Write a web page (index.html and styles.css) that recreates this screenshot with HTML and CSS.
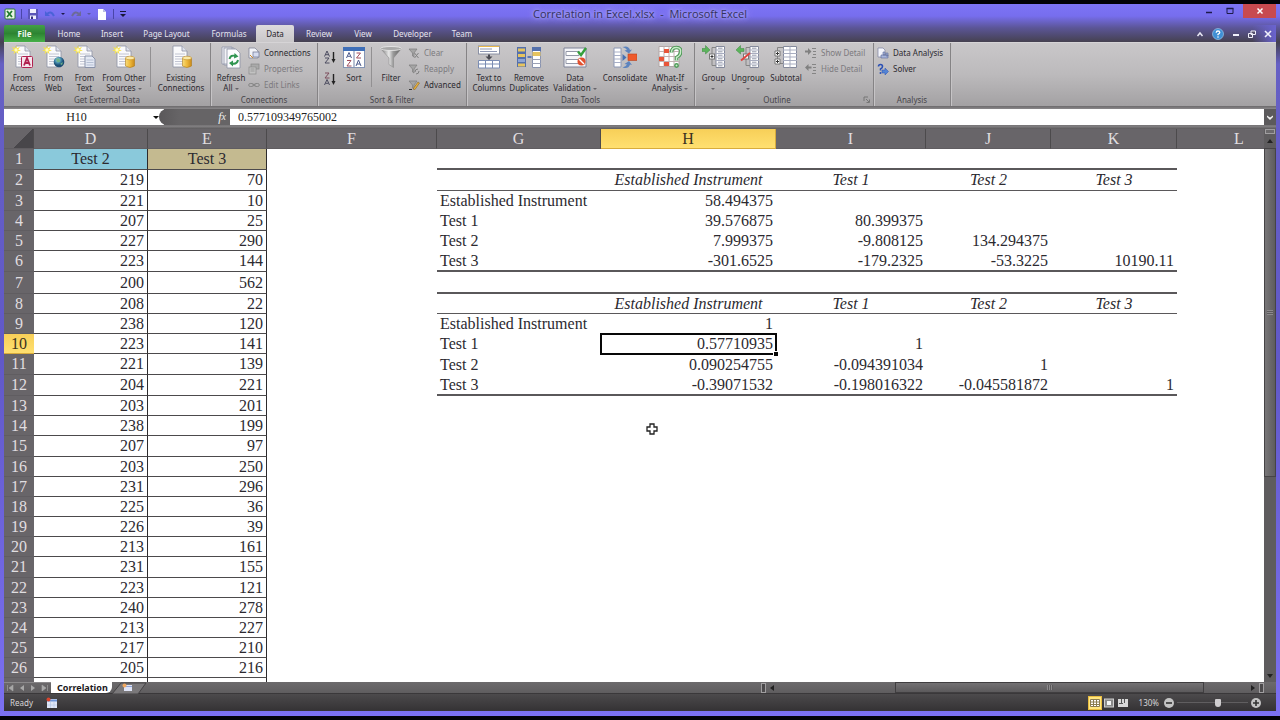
FILE: index.html
```html
<!DOCTYPE html>
<html lang="en">
<head>
<meta charset="utf-8">
<title>Correlation in Excel.xlsx - Microsoft Excel</title>
<link rel="stylesheet" href="styles.css">
</head>
<body>
<svg class="sprite" aria-hidden="true">
  <defs>
    <linearGradient id="gold" x1="0" x2="1"><stop offset="0" stop-color="#f7dc7a"/><stop offset=".5" stop-color="#efb93a"/><stop offset="1" stop-color="#c98a1c"/></linearGradient>
    <linearGradient id="steel" x1="0" x2="1"><stop offset="0" stop-color="#707070"/><stop offset=".4" stop-color="#e8e8e8"/><stop offset=".6" stop-color="#9a9a9a"/><stop offset="1" stop-color="#5c5c5c"/></linearGradient>
    <radialGradient id="globe" cx=".4" cy=".3"><stop offset="0" stop-color="#a8dcec"/><stop offset=".6" stop-color="#3f86a8"/><stop offset="1" stop-color="#1d4e74"/></radialGradient>
  </defs>
  <symbol id="sheet" viewBox="0 0 24 24"><path d="M5 1h9l5 5v16H5z" fill="#fafafc" stroke="#8e93a5" stroke-width=".8"/><path d="M14 1v5h5" fill="#dfe2ec" stroke="#8e93a5" stroke-width=".8"/><path d="M7 9h10M7 11.500h10M7 14h10M7 16.500h10M7 19h10" stroke="#b4b8c8" stroke-width=".8"/></symbol>
  <symbol id="star" viewBox="0 0 12 12"><path d="M6 0l1 4 4-2-2.500 3.500L12 7 8 7.500 9 11 6 8.500 3 11l1-3.500L0 7l3.500-1.500L1 2l4 2z" fill="#f7e34d"/><circle cx="6" cy="6" r="2" fill="#fffbc0"/></symbol>
  <symbol id="outline" viewBox="0 0 24 24"><path d="M14 1.500h8.500v21H14z" fill="#fff" stroke="#858a9c"/><path d="M14 5h9M14 8.500h9M14 12h9M14 15.500h9M14 19h9" stroke="#a8adc0"/><path d="M16 3.200h4.500M16 6.800h4.500M16 10.200h4.500M16 13.800h4.500M16 17.200h4.500M16 20.800h4.500" stroke="#858a9e" stroke-width=".9"/><path d="M14 2.500h-4v18h4" fill="none" stroke="#858585"/></symbol>
  <symbol id="funnel" viewBox="0 0 12 12"><path d="M1 2h8L6 6v4L4.500 9V6z" fill="#a5a5a5" stroke="#7c7c7c" stroke-width=".7"/></symbol>
</svg>

<div class="window">
  <header class="titlebar">
    <div class="quick">
      <svg class="i12" viewBox="0 0 12 12"><rect x="1" y="1" width="10" height="10" rx="1" fill="#e9f3e6" stroke="#2c7a35"/><path d="M3 3l5 6M8 3L3 9" stroke="#1f7a2e" stroke-width="1.800"/></svg>
      <span class="quick-sep"></span>
      <button aria-label="Save"><svg class="i12" viewBox="0 0 12 12"><path d="M1 1h10v10H1z" fill="#5b56b8"/><path d="M3 1h6v4H3zM3 7.500h6V11H3z" fill="#f0f0fc"/><path d="M4 8.500h2V11H4z" fill="#35317c"/></svg></button>
      <button aria-label="Undo"><svg class="i12" viewBox="0 0 12 12"><path d="M3 6q4-4 7 2" fill="none" stroke="#4a62d8" stroke-width="2"/><path d="M1 3v5h5z" fill="#4a62d8"/></svg></button>
      <i class="caret dim"></i>
      <button aria-label="Redo"><svg class="i12" viewBox="0 0 12 12"><path d="M9 6Q5 2 2 8" fill="none" stroke="#6c6a98" stroke-width="2"/><path d="M11 3v5H6z" fill="#6c6a98"/></svg></button>
      <i class="caret faint"></i>
      <button aria-label="New"><svg class="i12" viewBox="0 0 12 12"><path d="M2 1h5l3 3v8H2z" fill="#fff"/><path d="M7 1v3h3z" fill="#b9bce0"/></svg></button>
      <span class="quick-sep"></span>
      <button aria-label="Customize toolbar"><svg class="i8" viewBox="0 0 8 8"><path d="M1 1.500h6" stroke="#181838"/><path d="M1 4h6L4 7z" fill="#181838"/></svg></button>
    </div>
    <h1>Correlation in Excel.xlsx &nbsp;-&nbsp; Microsoft Excel</h1>
    <div class="winbtns">
      <button aria-label="Minimize"><svg class="i8" viewBox="0 0 8 8"><path d="M1 5.500h6" stroke="#1c1a4a" stroke-width="1.500"/></svg></button>
      <button aria-label="Maximize"><svg class="i8" viewBox="0 0 8 8"><path d="M1 1.500h6v5H1z" fill="none" stroke="#1c1a4a"/><path d="M.5 1.500h7" stroke="#1c1a4a" stroke-width="1.500"/></svg></button>
      <button class="close" aria-label="Close"><svg class="i8" viewBox="0 0 8 8"><path d="M1.500 1.500l5 5M6.500 1.500l-5 5" stroke="#fff" stroke-width="1.500"/></svg></button>
    </div>
  </header>

  <nav class="tabs">
    <button class="tab file">File</button>
    <button class="tab w48">Home</button>
    <button class="tab w38">Insert</button>
    <button class="tab w71">Page Layout</button>
    <button class="tab w54">Formulas</button>
    <button class="tab w38 active">Data</button>
    <button class="tab w50">Review</button>
    <button class="tab w38">View</button>
    <button class="tab w61">Developer</button>
    <button class="tab w38">Team</button>
    <div class="docbtns">
      <button aria-label="Collapse ribbon"><svg class="i8" viewBox="0 0 8 8"><path d="M1.500 6L4 3l2.500 3" fill="none" stroke="#e8e8f4" stroke-width="1.500"/></svg></button>
      <button aria-label="Help"><svg class="i12" viewBox="0 0 12 12"><circle cx="6" cy="6" r="5.500" fill="#3f8fd4" stroke="#a8d4f4" stroke-width=".6"/><path d="M4.200 4.700Q4.300 3 6 3t1.800 1.500Q7.800 5.500 6 6.300v1" fill="none" stroke="#fff" stroke-width="1.300"/><circle cx="6" cy="9" r=".8" fill="#fff"/></svg></button>
      <button aria-label="Minimize workbook"><svg class="i8" viewBox="0 0 8 8"><path d="M1 5h6" stroke="#f0f0fa" stroke-width="2"/></svg></button>
      <button aria-label="Restore workbook"><svg class="i8" viewBox="0 0 8 8"><path d="M3 1h4.500v3.500H3zM.5 3.500H4.500v4H.5z" fill="#55506c" stroke="#f0f0fa"/></svg></button>
      <button aria-label="Close workbook"><svg class="i8" viewBox="0 0 8 8"><path d="M1 1l6 6M7 1L1 7" stroke="#f0f0fa" stroke-width="1.600"/></svg></button>
    </div>
  </nav>

  <section class="ribbon">
    <div class="group g-get">
      <div class="tools">
        <button class="big w31"><svg viewBox="0 0 24 24"><use href="#sheet"/><use href="#star" x="0" y="0" width="10" height="10"/><rect x="10.500" y="11.500" width="11" height="11" rx="1" fill="#f6e4ec" stroke="#b0214f"/><path d="M13 20.500l3-7.500 3 7.500M14 18h4" fill="none" stroke="#b0214f" stroke-width="1.800"/></svg><span>From<br>Access</span></button>
        <button class="big w31"><svg viewBox="0 0 24 24"><use href="#sheet"/><use href="#star" x="0" y="0" width="10" height="10"/><circle cx="17" cy="17" r="5.300" fill="url(#globe)"/><path d="M14 14q3-2 4 1t-3 2zM18 19l3-2-1 3z" fill="#6fb38a"/></svg><span>From<br>Web</span></button>
        <button class="big w31"><svg viewBox="0 0 24 24"><use href="#sheet"/><use href="#star" x="0" y="0" width="10" height="10"/><path d="M12 11h7l3 3v8.500H12z" fill="#e3e8f3" stroke="#8a93aa"/><path d="M13.500 15h7M13.500 17.500h7M13.500 20h7" stroke="#a8b4ca" stroke-width=".8"/></svg><span>From<br>Text</span></button>
        <button class="big w48"><svg viewBox="0 0 24 24"><use href="#sheet"/><use href="#star" x="0" y="0" width="10" height="10"/><path d="M13.500 13v8q4.500 3 9 0v-8z" fill="url(#gold)" stroke="#b07c1a" stroke-width=".6"/><ellipse cx="18" cy="13" rx="4.500" ry="1.800" fill="#fbe9a6" stroke="#c08d28" stroke-width=".6"/></svg><span>From Other<br>Sources <i class="caret"></i></span></button>
        <span class="vsep"></span>
        <button class="big w56"><svg viewBox="0 0 24 24"><use href="#sheet" x="-1"/><path d="M13.500 13v8q4.500 3 9 0v-8z" fill="url(#gold)" stroke="#b07c1a" stroke-width=".6"/><ellipse cx="18" cy="13" rx="4.500" ry="1.800" fill="#fbe9a6" stroke="#c08d28" stroke-width=".6"/></svg><span>Existing<br>Connections</span></button>
      </div>
      <h2>Get External Data</h2>
    </div>

    <div class="group g-conn">
      <div class="tools">
        <button class="big w34"><svg viewBox="0 0 24 24"><path d="M3 2h10v17H3zM5 3h10v17H5z" fill="#f2f2f6" stroke="#9196a8" stroke-width=".8"/><path d="M8 4h9l4 4v15H8z" fill="#fbfbfd" stroke="#8e93a5" stroke-width=".8"/><path d="M10.500 14q1-4.500 6-3" fill="none" stroke="#2f9450" stroke-width="2"/><path d="M15.500 8l4 3.500-4.500 2zM14 15.500l-4 2.500 4 3.500z" fill="#2f9450"/><path d="M19 15q-1 4.500-6 3.500" fill="none" stroke="#2f9450" stroke-width="2"/></svg><span>Refresh<br>All <i class="caret"></i></span></button>
        <div class="stack">
          <button class="small"><svg viewBox="0 0 12 12"><path d="M1 1h6l3 3v7H1z" fill="#f2f3f8" stroke="#787d90" stroke-width=".7"/><rect x="5" y="5" width="6" height="5" fill="#d6dcf0" stroke="#6c7290" stroke-width=".7"/><path d="M2 8l3 3" stroke="#d08a28"/></svg>Connections</button>
          <button class="small" disabled><svg viewBox="0 0 12 12"><rect x="3" y="1" width="8" height="5" fill="#aaa" stroke="#888" stroke-width=".7"/><rect x="1" y="4" width="7" height="7" fill="#c2c2c2" stroke="#8a8a8a" stroke-width=".7"/><path d="M2.500 6h4M2.500 8h4" stroke="#8a8a8a" stroke-width=".7"/></svg>Properties</button>
          <button class="small" disabled><svg viewBox="0 0 12 12"><rect x=".7" y="4.500" width="5" height="3" rx="1.500" fill="none" stroke="#888"/><rect x="6.300" y="4.500" width="5" height="3" rx="1.500" fill="none" stroke="#888"/><path d="M4 6h4" stroke="#888"/></svg>Edit Links</button>
        </div>
      </div>
      <h2>Connections</h2>
    </div>

    <div class="group g-sort">
      <div class="tools">
        <div class="sorts">
          <button aria-label="Sort A to Z"><svg viewBox="0 0 14 14"><path d="M1.500 6.500L4 1l2.500 5.500M2.500 4.700h3" fill="none" stroke="#4c4c60"/><path d="M2 8h4l-4 5h4.500" fill="none" stroke="#4c4c60"/><path d="M10.500 2v8" stroke="#222" stroke-width="1.400"/><path d="M8.500 9h4l-2 4z" fill="#222"/></svg></button>
          <button aria-label="Sort Z to A"><svg viewBox="0 0 14 14"><path d="M2 1h4L2 6h4.500" fill="none" stroke="#7c4c5c"/><path d="M1.500 13L4 7.500 6.500 13M2.500 11.300h3" fill="none" stroke="#4c4c60"/><path d="M10.500 2v8" stroke="#222" stroke-width="1.400"/><path d="M8.500 9h4l-2 4z" fill="#222"/></svg></button>
        </div>
        <button class="big w30"><svg viewBox="0 0 24 24"><rect x="1.500" y="2.500" width="21" height="20" fill="#fff" stroke="#8494b4"/><path d="M1 2h22v4H1z" fill="#3f6fb8"/><path d="M12 6v16" stroke="#7082a6"/><path d="M4.500 13L7 7.500 9.500 13M5.500 11.300h3M14 21l2.500-6 2.500 6M15 19h3" fill="none" stroke="#4c5a8c"/><path d="M5 15.500h4L5 21h4.500M14.500 8h4l-4 5H19" fill="none" stroke="#a04c5c"/></svg><span>Sort</span></button>
        <span class="vsep"></span>
        <button class="big w34"><svg viewBox="0 0 24 24"><path d="M1.500 3.500h21L14.500 13v9.500l-4.500-3V13z" fill="url(#steel)" stroke="#858585" stroke-width=".5"/><ellipse cx="12" cy="3.500" rx="10.500" ry="2" fill="#a8a8a8" stroke="#ececec" stroke-width=".8"/></svg><span>Filter</span></button>
        <div class="stack">
          <button class="small" disabled><svg viewBox="0 0 12 12"><use href="#funnel"/><path d="M6.500 6l4 5M10.500 6l-4 5" stroke="#808080"/></svg>Clear</button>
          <button class="small" disabled><svg viewBox="0 0 12 12"><use href="#funnel"/><path d="M7 9q0-3 3-3M11 8q0 3-3 3" fill="none" stroke="#808080"/></svg>Reapply</button>
          <button class="small"><svg viewBox="0 0 12 12"><use href="#funnel"/><path d="M5 10L10 3l1.500 1L7 10.500z" fill="#e8b13c" stroke="#7a5a1c" stroke-width=".5"/><path d="M1 10.500h3" stroke="#333"/></svg>Advanced</button>
        </div>
      </div>
      <h2>Sort &amp; Filter</h2>
    </div>

    <div class="group g-data">
      <div class="tools">
        <button class="big w38"><svg viewBox="0 0 24 24"><rect x="1.500" y="1" width="21" height="8" fill="#fff" stroke="#8a90a4"/><path d="M1.500 1.500h21" stroke="#e8b84c"/><path d="M3 4h12M3 6.500h17" stroke="#8f98b4"/><path d="M11 9.500h2v2h2.500L12 15 8.500 11.500H11z" fill="#4a4a52"/><path d="M1.500 15.500h21v7.500h-21zM8.500 15.500v7.500M15.500 15.500v7.500M1.500 19h21" fill="#fff" stroke="#7b8db4"/></svg><span>Text to<br>Columns</span></button>
        <button class="big w42"><svg viewBox="0 0 24 24"><path d="M0 2h9v20H0z" fill="#5470ac"/><path d="M1 3.500h7v3H1zM1 9h7v3H1zM1 18.500h7v3H1z" fill="#e6c460"/><path d="M1 14h7v3H1z" fill="#8fa5d4"/><path d="M10.500 12h4" stroke="#3d62b0" stroke-width="1.500"/><path d="M15.500 2.500h8v20h-8z" fill="#fff" stroke="#8a94b0"/><path d="M15 2h9v4h-9z" fill="#5470ac"/><path d="M15.500 7h8v4h-8z" fill="#e6c460"/><path d="M15 14.500h9M15 18.500h9" stroke="#9aa0b4"/></svg><span>Remove<br>Duplicates</span></button>
        <button class="big w50"><svg viewBox="0 0 24 24"><path d="M1 3h22v19H1z" fill="#f4f4f8" stroke="#7e8398"/><path d="M3 6.500h13v4H3zM3 14.500h13v4H3z" fill="#fff" stroke="#9498a8"/><path d="M15 6.500l3 3.500 5-7" fill="none" stroke="#35a03c" stroke-width="2.400"/><circle cx="18.500" cy="16.500" r="4" fill="#e2502f"/><path d="M16 14l5 5" stroke="#fff" stroke-width="1.400"/></svg><span>Data<br>Validation <i class="caret"></i></span></button>
        <button class="big w50"><svg viewBox="0 0 24 24"><path d="M1 3h7v19H1z" fill="#fff" stroke="#8a96b4"/><path d="M1 7h7M1 10.500h7M1 14h7M1 17.500h7" stroke="#a8b0c8"/><path d="M9.500 2q6-2 7.500 3l2-.5-3 4-4.500-3 2.500-.5Q13 3 9.500 2zM9.500 22.500q6 2 7.500-3l2 .5-3-4-4.500 3 2.500.5Q13 21.500 9.500 22.500z" fill="#5c83be"/><path d="M9.500 9l4 3.500-4 3.500z" fill="#4671b4"/><rect x="15" y="9" width="9" height="6.500" fill="#ee5a2c" stroke="#b84420" stroke-width=".6"/></svg><span>Consolidate</span></button>
        <button class="big w40"><svg viewBox="0 0 24 24"><path d="M1 1.500h20v20H1z" fill="#fff" stroke="#b0a6a6"/><path d="M1 6.500h20M1 11.500h20M1 16.500h20M6 1.500v20M11 1.500v20M16 1.500v20" stroke="#c3b3b3"/><path d="M6 4h5v4H6zM1 12h5v4H1zM6 17h5v4H6z" fill="#e8553a"/><path d="M13.500 7.500q0-5 5-5t4 5q0 3-4 5v3" fill="none" stroke="#4f9a58" stroke-width="3.600"/><path d="M13.500 7.500q0-5 5-5t4 5q0 3-4 5v3" fill="none" stroke="#c8ecc8" stroke-width="1.400"/><circle cx="18.500" cy="20.500" r="2.400" fill="#4f9a58"/><circle cx="18.500" cy="20.500" r="1" fill="#c8ecc8"/></svg><span>What-If<br>Analysis <i class="caret"></i></span></button>
      </div>
      <h2>Data Tools</h2>
    </div>

    <div class="group g-out">
      <div class="tools">
        <button class="big w31"><svg viewBox="0 0 24 24"><use href="#outline"/><rect x="7.500" y="9" width="5" height="5" fill="#fff" stroke="#777"/><path d="M8.500 11.500h3M10 10v3" stroke="#333"/><path d="M0 3.500h3.500V.5L8 5 3.500 9V6.500H0z" fill="#5cb45c" stroke="#3c8a40" stroke-width=".5"/></svg><span>Group<br><i class="caret"></i></span></button>
        <button class="big w38"><svg viewBox="0 0 24 24"><use href="#outline"/><rect x="7.500" y="9" width="5" height="5" fill="#fff" stroke="#777"/><path d="M5 15.500L14 8" stroke="#e04440" stroke-width="2"/><path d="M8 3.500H4.500V.5L0 5l4.500 4V6.500H8z" fill="#5cb45c" stroke="#3c8a40" stroke-width=".5"/></svg><span>Ungroup<br><i class="caret"></i></span></button>
        <button class="big w38"><svg viewBox="0 0 24 24"><path d="M9.500 1.500h13v21h-13z" fill="#fff" stroke="#858a9c"/><path d="M9 5h14M9 8.500h14M9 12h14M9 15.500h14M9 19h14M16 1.500v21" stroke="#a8adc0"/><path d="M9 2.500H3.500v16H9" fill="none" stroke="#858585"/><path d="M1 6h5v5H1zM1 14h5v5H1z" fill="#fff" stroke="#777"/><path d="M2 8.500h3M3.500 7v3M2 16.500h3M3.500 15v3" stroke="#333"/></svg><span>Subtotal</span></button>
        <div class="stack">
          <button class="small" disabled><svg viewBox="0 0 12 12"><path d="M0 3.500h3V1l3.500 3.500L3 8V5.500H0z" fill="#808080"/><path d="M7 1.500h4M8 4.500h3M8 7.500h3M7 10.500h4" stroke="#858585"/></svg>Show Detail</button>
          <button class="small" disabled><svg viewBox="0 0 12 12"><path d="M6.500 3.500h-3V1L0 4.500 3.500 8V5.500h3z" fill="#808080"/><path d="M7 1.500h4M8 4.500h3M8 7.500h3M7 10.500h4" stroke="#858585"/></svg>Hide Detail</button>
        </div>
      </div>
      <h2>Outline</h2>
      <button class="launcher" aria-label="Outline settings"><svg class="i8" viewBox="0 0 8 8"><path d="M1 5V1h4" fill="none" stroke="#777"/><path d="M3 3l3 3M6.500 3.500v3h-3" fill="none" stroke="#777"/></svg></button>
    </div>

    <div class="group g-ana">
      <div class="tools">
        <div class="stack">
          <button class="small"><svg viewBox="0 0 12 12"><path d="M1 1h5l2 2v7H1z" fill="#f4f5fb" stroke="#7c82a0" stroke-width=".7"/><path d="M4 8h7v3H4zM6 5h2v3H6zM9 6h2v3H9z" fill="#a8b6dc" stroke="#5c6a98" stroke-width=".6"/></svg>Data Analysis</button>
          <button class="small"><svg viewBox="0 0 12 12"><path d="M1.500 3.500Q1.500 1.500 3.500 1.500t2 2Q5.500 5 3.500 6v1.500" fill="none" stroke="#2b50b4" stroke-width="1.600"/><circle cx="3.500" cy="10" r="1" fill="#2b50b4"/><path d="M5 7h3V5l3.500 3.500L8 12v-2H5z" fill="#5484d4" stroke="#2b50b4" stroke-width=".5"/></svg>Solver</button>
        </div>
      </div>
      <h2>Analysis</h2>
    </div>
  </section>

  <div class="formula">
    <div class="namebox"><input aria-label="Name box" value="H10"><button aria-label="Names"><i class="caret dark"></i></button></div>
    <div class="fxbar"><span class="knob"></span><button class="fx" aria-label="Insert function">f<sub>x</sub></button></div>
    <input class="fxinput" aria-label="Formula" value="0.577109349765002">
    <button class="expand" aria-label="Expand formula bar"><svg class="i8" viewBox="0 0 8 8"><path d="M1 2.500l3 2 3-2v1.500L4 7 1 4z" fill="#f4f4f4"/></svg></button>
  </div>

  <main class="work">
    <div class="sheet">
      <table class="grid">
        <colgroup><col class="c-n"><col class="c-d"><col class="c-e"><col class="c-f"><col class="c-g"><col class="c-h"><col class="c-i"><col class="c-j"><col class="c-k"><col class="c-l"></colgroup>
        <thead><tr><th class="corner"></th><th>D</th><th>E</th><th>F</th><th>G</th><th class="on">H</th><th>I</th><th>J</th><th>K</th><th>L</th></tr></thead>
        <tbody>
        <tr class="t rule2"><th>1</th><td class="b blue">Test 2</td><td class="b tan">Test 3</td><td></td><td class="m"></td><td class="m"></td><td class="m"></td><td class="m"></td><td class="m"></td><td></td></tr>
        <tr class="t rule1 head"><th>2</th><td class="b">219</td><td class="b">70</td><td></td><td class="m"></td><td class="m">Established Instrument</td><td class="m">Test 1</td><td class="m">Test 2</td><td class="m">Test 3</td><td></td></tr>
        <tr><th>3</th><td class="b">221</td><td class="b">10</td><td></td><td class="l">Established Instrument</td><td>58.494375</td><td></td><td></td><td></td><td></td></tr>
        <tr><th>4</th><td class="b">207</td><td class="b">25</td><td></td><td class="l">Test 1</td><td>39.576875</td><td>80.399375</td><td></td><td></td><td></td></tr>
        <tr><th>5</th><td class="b">227</td><td class="b">290</td><td></td><td class="l">Test 2</td><td>7.999375</td><td>-9.808125</td><td>134.294375</td><td></td><td></td></tr>
        <tr class="t rule2"><th>6</th><td class="b">223</td><td class="b">144</td><td></td><td class="m l">Test 3</td><td class="m">-301.6525</td><td class="m">-179.2325</td><td class="m">-53.3225</td><td class="m">10190.11</td><td></td></tr>
        <tr class="tt rule2"><th>7</th><td class="b">200</td><td class="b">562</td><td></td><td class="m"></td><td class="m"></td><td class="m"></td><td class="m"></td><td class="m"></td><td></td></tr>
        <tr class="rule1 head"><th>8</th><td class="b">208</td><td class="b">22</td><td></td><td class="m"></td><td class="m">Established Instrument</td><td class="m">Test 1</td><td class="m">Test 2</td><td class="m">Test 3</td><td></td></tr>
        <tr><th>9</th><td class="b">238</td><td class="b">120</td><td></td><td class="l">Established Instrument</td><td>1</td><td></td><td></td><td></td><td></td></tr>
        <tr><th class="on">10</th><td class="b">223</td><td class="b">141</td><td></td><td class="l">Test 1</td><td class="selected">0.57710935</td><td>1</td><td></td><td></td><td></td></tr>
        <tr class="t"><th>11</th><td class="b">221</td><td class="b">139</td><td></td><td class="l">Test 2</td><td>0.090254755</td><td>-0.094391034</td><td>1</td><td></td><td></td></tr>
        <tr class="t rule2"><th>12</th><td class="b">204</td><td class="b">221</td><td></td><td class="m l">Test 3</td><td class="m">-0.39071532</td><td class="m">-0.198016322</td><td class="m">-0.045581872</td><td class="m">1</td><td></td></tr>
        <tr><th>13</th><td class="b">203</td><td class="b">201</td><td colspan="7"></td></tr>
        <tr><th>14</th><td class="b">238</td><td class="b">199</td><td colspan="7"></td></tr>
        <tr class="t"><th>15</th><td class="b">207</td><td class="b">97</td><td colspan="7"></td></tr>
        <tr><th>16</th><td class="b">203</td><td class="b">250</td><td colspan="7"></td></tr>
        <tr><th>17</th><td class="b">231</td><td class="b">296</td><td colspan="7"></td></tr>
        <tr><th>18</th><td class="b">225</td><td class="b">36</td><td colspan="7"></td></tr>
        <tr><th>19</th><td class="b">226</td><td class="b">39</td><td colspan="7"></td></tr>
        <tr><th>20</th><td class="b">213</td><td class="b">161</td><td colspan="7"></td></tr>
        <tr class="t"><th>21</th><td class="b">231</td><td class="b">155</td><td colspan="7"></td></tr>
        <tr><th>22</th><td class="b">223</td><td class="b">121</td><td colspan="7"></td></tr>
        <tr><th>23</th><td class="b">240</td><td class="b">278</td><td colspan="7"></td></tr>
        <tr><th>24</th><td class="b">213</td><td class="b">227</td><td colspan="7"></td></tr>
        <tr><th>25</th><td class="b">217</td><td class="b">210</td><td colspan="7"></td></tr>
        <tr><th>26</th><td class="b">205</td><td class="b">216</td><td colspan="7"></td></tr>
        <tr><th></th><td class="b"></td><td class="b"></td><td colspan="7"></td></tr>
        </tbody>
      </table>
      <svg class="pointer" viewBox="0 0 12 12"><path d="M4 1h4v3h3v4H8v3H4V8H1V4h3z" fill="#fff" stroke="#222" stroke-width="1.300"/></svg>
    </div>
    <div class="vscroll">
      <span class="split"></span>
      <i class="arrow up"></i>
      <span class="vthumb"><i></i></span>
      <span class="vtrack"></span>
      <i class="arrow down"></i>
    </div>
  </main>

  <div class="sheetbar">
    <div class="sheetnav">
      <button aria-label="First sheet"><svg class="i8" viewBox="0 0 8 8"><path d="M1.500 1v6M7 1v6L3 4z" fill="#a8a8a8" stroke="#a8a8a8" stroke-width=".6"/></svg></button>
      <button aria-label="Previous sheet"><svg class="i8" viewBox="0 0 8 8"><path d="M6 1v6L2 4z" fill="#a8a8a8"/></svg></button>
      <button aria-label="Next sheet"><svg class="i8" viewBox="0 0 8 8"><path d="M2 1v6l4-3z" fill="#a8a8a8"/></svg></button>
      <button aria-label="Last sheet"><svg class="i8" viewBox="0 0 8 8"><path d="M6.500 1v6M1 1v6l4-3z" fill="#a8a8a8" stroke="#a8a8a8" stroke-width=".6"/></svg></button>
    </div>
    <button class="sheettab">Correlation</button>
    <button class="newsheet" aria-label="Insert worksheet"><svg viewBox="0 0 36 12"><path d="M0 12L9 1h25l-8 11z" fill="#7a787a" stroke="#454345"/><rect x="12" y="3" width="8" height="6" fill="#dfe4f6"/><path d="M12 4.500h8" stroke="#8fa4d8"/><circle cx="12.500" cy="3.500" r="2" fill="#f0a860"/></svg></button>
    <div class="hscroll">
      <span class="hsplit"></span>
      <i class="arrow left"></i>
      <span class="htrack-a"></span>
      <span class="hthumb"><i></i></span>
      <span class="htrack-b"></span>
      <i class="arrow right"></i>
      <span class="hsplit"></span>
    </div>
  </div>

  <footer class="status">
    <span class="ready">Ready</span>
    <button class="macro" aria-label="Record macro"><svg class="i12" viewBox="0 0 12 12"><rect x="1" y="2" width="10" height="9" fill="#dfe6f6"/><path d="M1 3.500h10" stroke="#6c94d8" stroke-width="2"/><path d="M4.500 5v6M8 5v6M1 8h10" stroke="#b8c8e8" stroke-width=".7"/><circle cx="2.500" cy="2.500" r="2" fill="#d8452e"/></svg></button>
    <div class="views">
      <button class="view on" aria-label="Normal view"><svg viewBox="0 0 12 12"><path d="M1.500 2.500h9v7h-9zM1.500 5h9M1.500 7.500h9M4.500 2.500v7M7.500 2.500v7" fill="#fff" stroke="#8a7c50"/></svg></button>
      <button class="view" aria-label="Page layout view"><svg viewBox="0 0 12 12"><rect x="1.500" y="2" width="9" height="8" fill="#8a8a8a" stroke="#d0d0d0"/><rect x="4" y="4" width="4" height="4" fill="#f4f4f4"/></svg></button>
      <button class="view" aria-label="Page break view"><svg viewBox="0 0 12 12"><rect x="1" y="2" width="10" height="8" fill="#d8d8d8"/><path d="M4.500 2v4M7.500 2v4M2 6.500h4" stroke="#555"/></svg></button>
      <span class="pct">130%</span>
      <button class="zoombtn" aria-label="Zoom out"><svg viewBox="0 0 12 12"><circle cx="6" cy="6" r="5" fill="#c4c4c4"/><path d="M3 6h6" stroke="#333" stroke-width="1.600"/></svg></button>
      <input type="range" min="10" max="200" value="120" aria-label="Zoom">
      <button class="zoombtn" aria-label="Zoom in"><svg viewBox="0 0 12 12"><circle cx="6" cy="6" r="5" fill="#c4c4c4"/><path d="M3 6h6M6 3v6" stroke="#333" stroke-width="1.600"/></svg></button>
    </div>
  </footer>
</div>
</body>
</html>
```
FILE: styles.css
```css
* { box-sizing: border-box; }
body {
  margin: 0;
  height: 100vh;
  padding: 4px 0;
  background: #020208;
  font: 8px/10px "Noto Sans", "Open Sans", sans-serif;
  color: #2c2a30;
  display: flex;
  flex-direction: column;
  overflow: hidden;
}
button {
  margin: 0;
  padding: 0;
  border: 0;
  background: none;
  font: inherit;
  color: inherit;
  display: flex;
  align-items: center;
  justify-content: center;
}
input { border: 0; margin: 0; padding: 0; min-width: 0; border-radius: 0; outline: 0; }
svg { display: block; flex: none; }
.sprite { position: absolute; width: 0; height: 0; }
.i12 { width: 12px; height: 12px; }
.i8 { width: 8px; height: 8px; }
.caret {
  display: inline-block;
  border: 2px solid transparent;
  border-top-color: #66646a;
  border-bottom: 0;
  vertical-align: middle;
}
.caret.dim { border-top-color: #1c1a4a; }
.caret.faint { border-top-color: #5a58a0; }
.caret.dark { border-width: 3px 3px 0; border-top-color: #111; }

.window {
  flex: 1;
  min-height: 0;
  display: flex;
  flex-direction: column;
  padding: 0 4px 5px;
  background: linear-gradient(#7d74f6 0, #776eee 12px, #5b5596 24px, #454150 38px, #6660c4 60px, #6159c8 50%, #7b70f2 100%);
}

.titlebar { height: 21px; display: flex; align-items: flex-start; }
.quick { flex: 1; display: flex; align-items: center; gap: 5px; height: 20px; }
.quick-sep { width: 1px; height: 10px; background: #4a46a8; }
.titlebar h1 {
  margin: 0;
  font: 400 11px/20px "Open Sans", "Noto Sans", sans-serif;
  color: #34325c;
  text-shadow: 0 0 3px #b4b0f8, 0 0 6px #aca8f8, 0 0 9px #a09cf6;
}
.winbtns { flex: 1; display: flex; justify-content: flex-end; gap: 1px; }
.winbtns button { width: 20px; height: 14px; }
.winbtns .close { width: 33px; background: #c84a50; margin-left: 2px; }

.tabs { height: 17px; display: flex; }
.tab { height: 17px; color: #e6e4ee; padding: 0; }
.tab.file {
  width: 41px;
  font-weight: 700;
  color: #f0f8f0;
  background: linear-gradient(#43a047, #2d8432 50%, #46b048);
  border-radius: 2px 2px 0 0;
}
.tab.active { background: linear-gradient(#dddbdd, #c9c7c9); color: #26242a; border-radius: 2px 2px 0 0; }
.w30 { width: 30px; }
.w31 { width: 31px; }
.w34 { width: 34px; }
.w38 { width: 38px; }
.w40 { width: 40px; }
.w42 { width: 42px; }
.w48 { width: 48px; }
.w50 { width: 50px; }
.w54 { width: 54px; }
.w56 { width: 56px; }
.w61 { width: 61px; }
.w71 { width: 71px; }
.docbtns {
  flex: 1;
  display: flex;
  justify-content: flex-end;
  align-items: center;
  gap: 8px;
  padding-right: 4px;
  background: linear-gradient(90deg, transparent, transparent 97%, #6a63d0);
}

.ribbon {
  height: 64px;
  display: flex;
  background: linear-gradient(#c9c7c9, #bcbabc 50%, #a3a1a3);
  border-top: 1px solid #d6d4d6;
}
.group {
  position: relative;
  display: flex;
  flex-direction: column;
  border-right: 1px solid #858385;
  box-shadow: 1px 0 #c6c4c6;
}
.group h2 { margin: 0; font: inherit; text-align: center; color: #47454a; height: 11px; }
.tools { flex: 1; display: flex; align-items: flex-start; padding: 2px 0 0 3px; }
.g-get { width: 207px; }
.g-conn { width: 107px; }
.g-sort { width: 149px; }
.g-data { width: 228px; }
.g-out { width: 179px; }
.g-out h2 { padding-right: 14px; }
.g-ana { width: 77px; }
.big { flex: none; flex-direction: column; justify-content: flex-start; gap: 4px; white-space: nowrap; }
.big svg { width: 24px; height: 24px; }
.vsep { width: 1px; height: 40px; margin: 2px 2px 0; background: #929092; }
.small { height: 16px; gap: 4px; white-space: nowrap; color: #2c2a30; }
.small svg { width: 12px; height: 12px; }
.small:disabled { color: #7c7a7e; }
.stack { display: flex; flex-direction: column; align-items: flex-start; }
.sorts { display: flex; flex-direction: column; gap: 8px; padding: 5px 2px 0 2px; }
.sorts svg { width: 14px; height: 14px; }
.launcher { position: absolute; right: 2px; bottom: 2px; }

.formula {
  display: flex;
  height: 23px;
  padding: 3px 0 4px;
  background: linear-gradient(#6c6a6c 0, #8a888a 3px, #6c6a6c 19px, #858385 20px, #5c5a5c 100%);
}
.namebox { width: 160px; display: flex; background: #fff; }
.namebox input { width: 145px; text-align: center; background: none; font: 12px/16px "Liberation Serif", serif; color: #222; }
.namebox button { width: 14px; }
.fxbar { width: 66px; display: flex; justify-content: space-between; background: #666466; }
.knob { width: 20px; margin-left: -5px; border-radius: 8px 0 0 8px; background: linear-gradient(90deg, #5a585a, #666466); }
.fx { padding-right: 4px; font: italic 12px/12px "Liberation Serif", serif; color: #f0f0f0; }
.fx sub { font-size: 10px; line-height: 8px; }
.fxinput { flex: 1; padding-left: 8px; background: #fff; font: 12px/16px "Liberation Serif", serif; color: #222; }
.expand { width: 12px; background: #5c5a5c; }

.work { flex: 1; min-height: 0; display: flex; }
.sheet { flex: 1; min-width: 0; position: relative; overflow: hidden; background: #fff; }
.grid {
  table-layout: fixed;
  width: 1298px;
  border-collapse: separate;
  border-spacing: 0;
  font: 16px/18px "Liberation Serif", serif;
  color: #2c2a30;
}
.c-n { width: 30px; }
.c-d { width: 114px; }
.c-e { width: 119px; }
.c-f { width: 170px; }
.c-g { width: 164px; }
.c-h { width: 175px; }
.c-i { width: 150px; }
.c-j { width: 125px; }
.c-k { width: 126px; }
.c-l { width: 125px; }
.grid th, .grid td { padding: 0; height: 20px; white-space: nowrap; }
.grid th { font-weight: 400; background: #686569; color: #e0dee0; border-bottom: 1px solid #605d61; }
.grid thead th { border-right: 1px solid #4c4a4c; }
.grid th.on { background: linear-gradient(#f7cf58, #ffe070); color: #3a3220; border-color: #d8ac3c; }
.grid .corner { background: linear-gradient(135deg, #686569 60%, #48464a 60%); }
.grid td { text-align: right; padding-right: 3px; }
.grid .t th, .grid .t td { height: 21px; }
.grid .tt th, .grid .tt td { height: 22px; }
.grid .b { border-right: 1px solid #2c2a2c; border-bottom: 1px solid #4c4a4c; }
.grid .blue, .grid .tan { text-align: center; padding: 0; }
.grid .blue { background: #8ac9db; }
.grid .tan { background: #c4ba90; }
.grid .l { text-align: left; padding-left: 3px; }
.grid .rule1 .m { border-bottom: 1px solid #5a585a; }
.grid .rule2 .m { border-bottom: 2px solid #5a585a; }
.grid .head .m { font-style: italic; text-align: center; padding: 0; }
.grid .selected { position: relative; }
.selected::before { content: ""; position: absolute; inset: -1px; border: 2px solid #080808; }
.selected::after { content: ""; position: absolute; right: -2px; bottom: -2px; width: 4px; height: 4px; background: #080808; border: solid #fff; border-width: 1px 0 0 1px; }
.pointer { position: absolute; left: 642px; top: 294px; width: 12px; height: 12px; }

.vscroll { width: 12px; display: flex; flex-direction: column; align-items: center; background: #5e5c5e; }
.split { width: 10px; height: 5px; border: 1px solid #a09ea0; background: #6c6a6c; }
.arrow { flex: none; border: 3px solid transparent; }
.arrow.up { border-bottom: 4px solid #222; border-top: 0; margin: 5px 0; }
.arrow.down { border-top: 4px solid #222; border-bottom: 0; margin: 4px 0; }
.arrow.left { border-right: 4px solid #222; border-left: 0; margin: 0 4px; }
.arrow.right { border-left: 4px solid #222; border-right: 0; margin: 0 4px; }
.vthumb { flex: 329; width: 12px; background: linear-gradient(90deg, #787678, #5e5c5e); border: 1px solid #464446; display: grid; place-items: center; }
.vthumb i { width: 6px; height: 5px; background: repeating-linear-gradient(#8c8a8c 0 1px, #5c5a5c 1px 2px); }
.vtrack { flex: 194; }

.sheetbar { height: 12px; display: flex; background: linear-gradient(#6c6a6c, #5f5d5f); border-bottom: 1px solid #3a383a; }
.sheetnav { width: 47px; display: flex; justify-content: space-around; border-top: 1px solid #8a888a; }
.sheettab { padding: 0 4px 0 6px; background: #fff; color: #1a181c; font-size: 9px; font-weight: 700; border-radius: 0 0 6px 0; }
.newsheet svg { width: 36px; height: 12px; }
.hscroll { margin-left: auto; width: 515px; max-width: 60%; display: flex; align-items: center; padding-right: 12px; }
.hsplit { width: 5px; height: 10px; border: 1px solid #a09ea0; background: #4c4a4c; }
.htrack-a { flex: 118; }
.hthumb { flex: 310; height: 11px; background: linear-gradient(#737173, #5c5a5c); border: 1px solid #403e40; display: grid; place-items: center; }
.hthumb i { width: 6px; height: 5px; background: repeating-linear-gradient(90deg, #8c8a8c 0 1px, #5c5a5c 1px 2px); }
.htrack-b { flex: 43; }

.status { height: 17px; display: flex; align-items: center; padding: 0 14px 0 6px; background: linear-gradient(#4c4a4c, #343234); color: #d6d4d6; }
.macro { margin-left: 13px; }
.views { margin-left: auto; display: flex; align-items: center; gap: 2px; }
.view { width: 12px; height: 12px; }
.view svg, .zoombtn svg { width: 12px; height: 12px; }
.view.on { background: #ffe680; outline: 1px solid #e8bc40; }
.pct { margin: 0 2px 0 8px; }
.views input { appearance: none; width: 71px; height: 12px; background: linear-gradient(#605e60, #605e60) center / 100% 1px no-repeat; }
.views input::-webkit-slider-thumb { appearance: none; width: 6px; height: 8px; background: #cfcdcf; border-radius: 1px 1px 3px 3px; }
```
